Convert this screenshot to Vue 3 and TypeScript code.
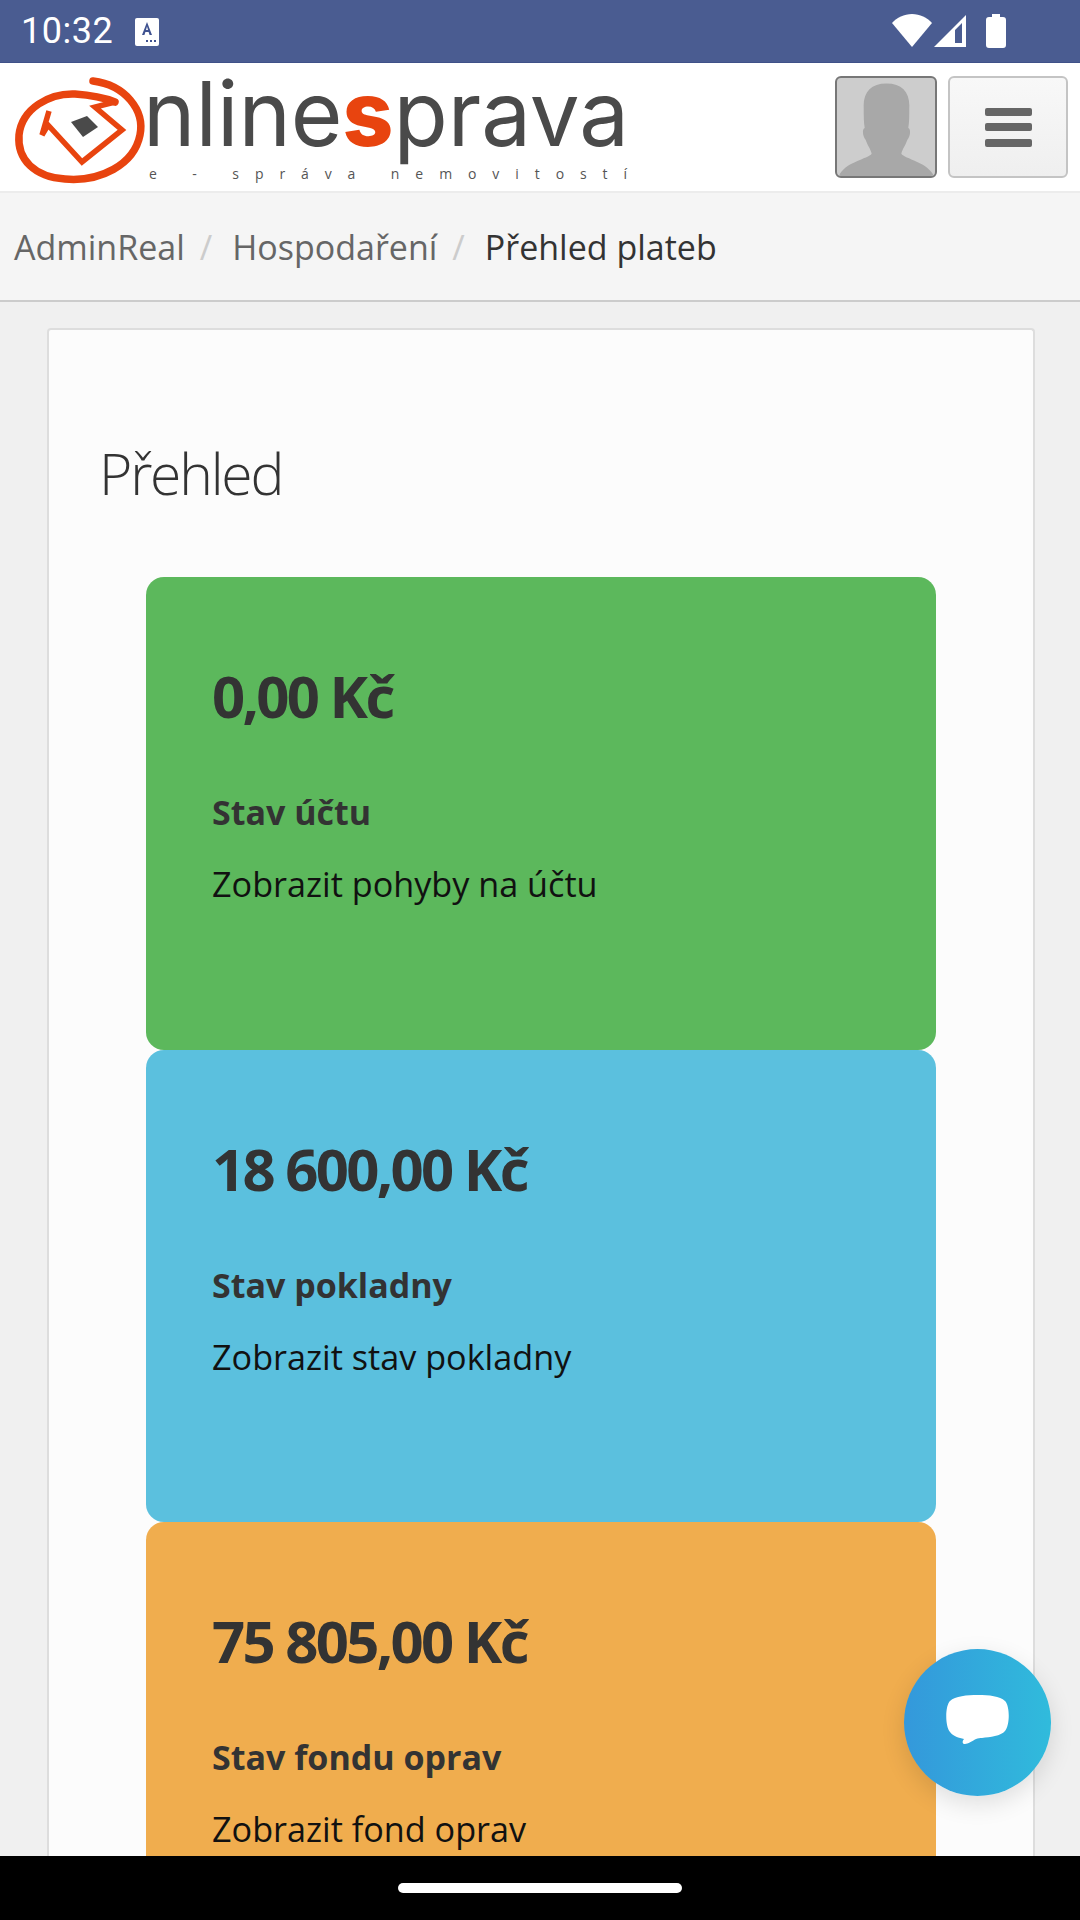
<script setup lang="ts">
interface Card { amount: string; title: string; link: string; tone: string }
const cards: Card[] = [
  { amount: '0,00 Kč', title: 'Stav účtu', link: 'Zobrazit pohyby na účtu', tone: 'green' },
  { amount: '18 600,00 Kč', title: 'Stav pokladny', link: 'Zobrazit stav pokladny', tone: 'blue' },
  { amount: '75 805,00 Kč', title: 'Stav fondu oprav', link: 'Zobrazit fond oprav', tone: 'orange' }
]
</script>

<template>
  <div class="screen">
    <header class="status">
      <div class="status-left">
        <span class="time">10:32</span>
        <svg class="a-icon" width="24" height="28" viewBox="0 0 24 28">
          <path d="M2 0h20a2 2 0 0 1 2 2v24a2 2 0 0 1-2 2H2a2 2 0 0 1-2-2V2a2 2 0 0 1 2-2z" fill="#fff" />
          <path d="M12 4l-5 13h2.400l1-3h3.200l1 3H17L12 4zm-1 8l1-3.600 1 3.600h-2z" fill="#3f5290" />
          <path d="M11 22h2v2h-2zM15 22h2v2h-2zM19 22h2v2h-2z" fill="#3f5290" />
        </svg>
      </div>
      <div class="status-right">
        <svg width="40" height="34" viewBox="0 0 40 34"><path d="M0 9C5 3.500 12 0 20 0s15 3.500 20 9L20 33z" fill="#fff" /></svg>
        <svg class="signal" width="34" height="34" viewBox="0 0 34 34"><path fill-rule="evenodd" d="M33 1v32H1zM29 9l-7 7v13h7z" fill="#fff" /></svg>
        <svg class="battery" width="20" height="34" viewBox="0 0 20 34"><path d="M6 0h8v3h3a3 3 0 0 1 3 3v25a3 3 0 0 1-3 3H3a3 3 0 0 1-3-3V6a3 3 0 0 1 3-3h3z" fill="#fff" /></svg>
      </div>
    </header>

    <nav class="navbar">
      <svg class="logo" width="640" height="130" viewBox="0 62 640 130">
        <path d="M93 81C125 85 145 110 140 135C134 165 100 182 65 179C35 177 17 160 19 135C22 108 50 93 75 94C90 95 105 98 115 102" fill="none" stroke="#e8440f" stroke-width="7.500" stroke-linecap="round" />
        <path d="M115 102L95 107L122 130L82 162L48 125L42 135L49 111" fill="none" stroke="#e8440f" stroke-width="5.500" stroke-linejoin="miter" />
        <path d="M71 122L87 116L98 127L83 137z" fill="#4a4a4a" />
        <text class="word" x="143" y="146" textLength="486" lengthAdjust="spacingAndGlyphs">nline<tspan class="word-s">s</tspan>prava</text>
        <text class="tag" x="149" y="179" textLength="478">e - správa  nemovitostí</text>
      </svg>
      <div class="nav-actions">
        <div class="avatar">
          <svg width="99" height="99" viewBox="0 0 100 99">
            <path d="M50 5c16 0 24 9 23 25c0 8 0 14-1 20c3 1 2 9-1 12c-2 6-5 9-6 14c3 5 28 9 33 23H2c4-14 30-18 33-23c-1-5-4-8-6-14c-3-3-4-11-1-12c-1-6-1-12-1-20C26 14 34 5 50 5z" fill="#a8a8a8" />
          </svg>
        </div>
        <button class="menu" type="button" aria-label="Menu">
          <span class="bar"></span><span class="bar"></span><span class="bar"></span>
        </button>
      </div>
    </nav>

    <ol class="crumbs">
      <li class="crumb">AdminReal</li>
      <li class="sep">/</li>
      <li class="crumb">Hospodaření</li>
      <li class="sep">/</li>
      <li class="crumb current">Přehled plateb</li>
    </ol>

    <main class="content">
      <section class="panel">
        <h1 class="heading">Přehled</h1>
        <div class="cards">
          <article v-for="c in cards" :key="c.title" class="card" :class="c.tone">
            <div class="amount">{{ c.amount }}</div>
            <div class="title">{{ c.title }}</div>
            <div class="link">{{ c.link }}</div>
          </article>
        </div>
      </section>
    </main>

    <footer class="gesture"><span class="pill"></span></footer>

    <button class="chat" type="button" aria-label="Chat">
      <svg width="64" height="58" viewBox="0 0 64 58">
        <path d="M32 1c11 0 22 1 27 6c5 5 5 24 0 30c-4 5-15 6-23 7c-2 0-4 0-6 1c-4 2-8 5-11 5c-3 0-3-3-1-5c-5-1-11-3-14-7C-1 32-1 12 4 7C9 2 21 1 32 1z" fill="#fff" />
      </svg>
    </button>
  </div>
</template>

<style>
html, body { margin: 0; padding: 0; }
</style>

<style scoped>
.screen {
  position: relative;
  display: flex;
  flex-direction: column;
  width: 1080px;
  height: 1920px;
  overflow: hidden;
  background: #f0f0f0;
  font-family: "Open Sans", "Noto Sans", sans-serif;
}
.status {
  flex: none;
  box-sizing: border-box;
  height: 63px;
  display: flex;
  justify-content: space-between;
  align-items: center;
  padding: 0 74px 0 21px;
  background: #4a5c91;
  border-bottom: 1px solid #3f5188;
}
.status-left { display: flex; align-items: center; gap: 22px; }
.time { font-family: Roboto, sans-serif; font-size: 36px; color: #fff; letter-spacing: 0.5px; }
.a-icon { margin-top: 1px; }
.status-right { display: flex; align-items: center; }
.signal { margin-left: 1px; }
.battery { margin-left: 19px; }
.navbar {
  flex: none;
  box-sizing: border-box;
  height: 130px;
  display: flex;
  justify-content: space-between;
  align-items: center;
  padding-right: 12px;
  background: #fff;
  border-bottom: 2px solid #ececec;
}
.logo { display: block; overflow: visible; }
.word { font-family: Inter, sans-serif; font-size: 90px; font-weight: 400; fill: #4a4a4a; }
.word-s { font-weight: 800; fill: #e8440f; }
.tag { font-family: "Open Sans", sans-serif; font-size: 14px; fill: #555; white-space: pre; }
.nav-actions { display: flex; gap: 11px; align-items: center; margin-top: 0; }
.avatar {
  box-sizing: border-box;
  width: 102px;
  height: 102px;
  background: #cdcdcd;
  border: 2px solid #777;
  border-radius: 6px;
  overflow: hidden;
}
.avatar svg { display: block; }
.menu {
  box-sizing: border-box;
  width: 120px;
  height: 102px;
  display: flex;
  flex-direction: column;
  align-items: center;
  justify-content: center;
  gap: 7.500px;
  padding: 0;
  background: linear-gradient(#f8f8f8, #efefef);
  border: 2px solid #c4c4c4;
  border-radius: 6px;
}
.bar { display: block; width: 47px; height: 8px; background: #666; border-radius: 2px; }
.crumbs {
  flex: none;
  box-sizing: border-box;
  height: 109px;
  margin: 0;
  padding: 0 0 0 14px;
  list-style: none;
  display: flex;
  align-items: center;
  font-size: 34px;
  color: #666;
  background: #f5f5f5;
  border-bottom: 2px solid #ccc;
}
.sep { color: #ccc; margin: 0 20px 0 15px; }
.current { color: #333; margin-left: 0; }
.content {
  flex: 1;
  min-height: 0;
  overflow: hidden;
  padding: 26px 45px 0 47px;
}
.panel {
  box-sizing: border-box;
  height: 100%;
  padding: 0 97px 0 50px;
  background: #fcfcfc;
  border: 2px solid #ddd;
  border-bottom: 0;
  border-radius: 4px 4px 0 0;
}
.heading {
  margin: 105px 0 0;
  font-size: 57px;
  line-height: 76px;
  font-weight: 300;
  letter-spacing: -2.200px;
  color: #333;
}
.cards { margin: 66px 0 0 47px; }
.card {
  box-sizing: border-box;
  height: 472.500px;
  padding: 87px 40px 0 66px;
  border-radius: 18px;
}
.green { background: #5cb85c; }
.blue { background: #5bc0de; }
.orange { background: #f0ad4e; }
.amount {
  font-size: 58px;
  line-height: 64px;
  font-weight: 700;
  letter-spacing: -2.700px;
  color: #333;
}
.title {
  margin-top: 64px;
  font-size: 34px;
  line-height: 40px;
  font-weight: 700;
  color: #333;
}
.link {
  margin-top: 32px;
  font-size: 34.200px;
  line-height: 40px;
  color: #111;
}
.gesture {
  flex: none;
  height: 64px;
  background: #000;
  display: flex;
  justify-content: center;
  align-items: center;
}
.pill { display: block; width: 284px; height: 10px; border-radius: 5px; background: #fff; }
.chat {
  position: absolute;
  left: 904px;
  top: 1649px;
  width: 147px;
  height: 147px;
  padding: 0;
  display: flex;
  align-items: center;
  justify-content: center;
  border: 0;
  border-radius: 50%;
  background: linear-gradient(90deg, #3498db, #30bbdc);
  box-shadow: 0 8px 24px rgba(0, 0, 0, 0.12);
}
</style>
